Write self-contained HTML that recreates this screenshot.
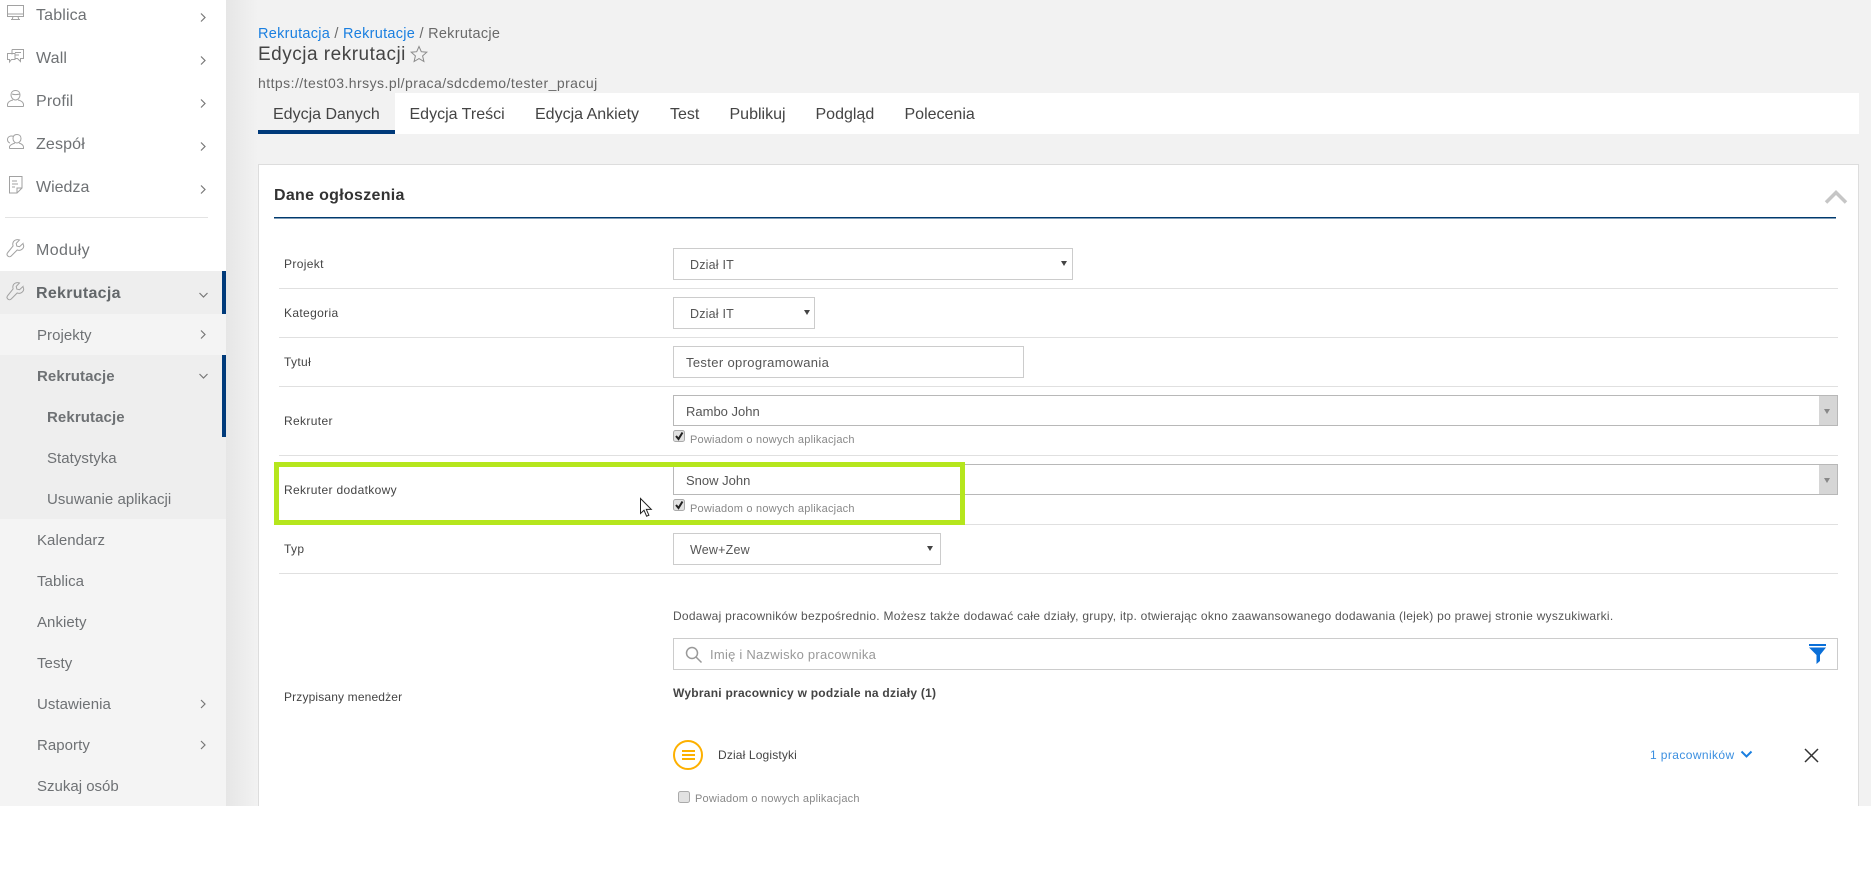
<!DOCTYPE html>
<html lang="pl">
<head>
<meta charset="utf-8">
<title>Edycja rekrutacji</title>
<style>
html,body{margin:0;padding:0;background:#fff;width:1874px;height:881px;overflow:hidden;font-family:"Liberation Sans",sans-serif}
#page{position:relative;width:1874px;height:881px;overflow:hidden;background:#fff}
.b{position:absolute}
.t{position:absolute;white-space:nowrap;line-height:20px;height:20px}
.s{font-size:15px;color:#6e7174;letter-spacing:.05px}
.m{font-size:16px;letter-spacing:.15px}
.sb{font-weight:700;letter-spacing:.1px;font-size:15px}
.l{font-size:12px;color:#444;letter-spacing:.35px;left:284px}
.tab{font-size:16px;color:#444;top:105px}
.in{position:absolute;box-sizing:border-box;background:#fff;border:1px solid #ccc}
.v{font-size:12.5px;color:#555;letter-spacing:.2px}
.hr{position:absolute;left:279px;width:1559px;height:1px;background:#e0e0e0}
.ar{position:absolute;width:0;height:0;border-left:3px solid transparent;border-right:3px solid transparent;border-top:5px solid #444}
.ck{font-size:11px;color:#888;letter-spacing:.22px}
svg{position:absolute;overflow:visible}
</style>
</head>
<body>
<div id="page">
  <!-- backgrounds -->
  <div class="b" style="left:0;top:0;width:1871px;height:806px;background:#f2f2f2"></div>
  <div class="b" style="left:226px;top:0;width:32px;height:806px;background:linear-gradient(90deg,#e6e6e6,#f2f2f2)"></div>

  <!-- sidebar -->
  <div class="b" style="left:0;top:0;width:226px;height:806px;background:#fff"></div>
  <div class="b" style="left:5px;top:217px;width:203px;height:1px;background:#e3e3e3"></div>
  <div class="b" style="left:0;top:271px;width:226px;height:43px;background:#eee"></div>
  <div class="b" style="left:0;top:314px;width:226px;height:492px;background:#f4f4f4"></div>
  <div class="b" style="left:0;top:355px;width:226px;height:164px;background:#eee"></div>
  <div class="b" style="left:222px;top:271px;width:4px;height:43px;background:#003a7a"></div>
  <div class="b" style="left:222px;top:355px;width:4px;height:82px;background:#003a7a"></div>

  <div class="t s m" style="left:36px;top:6px">Tablica</div>
  <div class="t s m" style="left:36px;top:49px">Wall</div>
  <div class="t s m" style="left:36px;top:92px">Profil</div>
  <div class="t s m" style="left:36px;top:135px">Zespół</div>
  <div class="t s m" style="left:36px;top:178px;letter-spacing:0">Wiedza</div>
  <div class="t s m" style="left:36px;top:241px;letter-spacing:.4px">Moduły</div>
  <div class="t s sb" style="left:36px;top:284px;font-size:16px;letter-spacing:.3px;color:#63676a">Rekrutacja</div>
  <div class="t s" style="left:37px;top:326px">Projekty</div>
  <div class="t s sb" style="left:37px;top:367px">Rekrutacje</div>
  <div class="t s sb" style="left:47px;top:408px">Rekrutacje</div>
  <div class="t s" style="left:47px;top:449px">Statystyka</div>
  <div class="t s" style="left:47px;top:490px">Usuwanie aplikacji</div>
  <div class="t s" style="left:37px;top:531px">Kalendarz</div>
  <div class="t s" style="left:37px;top:572px">Tablica</div>
  <div class="t s" style="left:37px;top:613px">Ankiety</div>
  <div class="t s" style="left:37px;top:654px">Testy</div>
  <div class="t s" style="left:37px;top:695px">Ustawienia</div>
  <div class="t s" style="left:37px;top:736px">Raporty</div>
  <div class="t s" style="left:37px;top:777px;letter-spacing:0">Szukaj osób</div>

  <!-- sidebar chevrons -->
  <svg style="left:0;top:0" width="226" height="806" fill="none" stroke="#777" stroke-width="1.2">
    <path d="M201 13.500l4 4-4 4M201 56.500l4 4-4 4M201 99.500l4 4-4 4M201 142.500l4 4-4 4M201 185.500l4 4-4 4"/>
    <path d="M201 330.500l4 4-4 4M201 700l4 4-4 4M201 741l4 4-4 4"/>
    <path d="M199.500 293l4 4 4-4M199.500 374l4 4 4-4"/>
  </svg>

  <!-- sidebar icons -->
  <svg style="left:0;top:0" width="40" height="310" fill="none" stroke="#a2a2a2" stroke-width="1">
    <path d="M7.500 5.500h16v11h-16zM7.500 14h16M13 16.500l-.8 3M18 16.500l.8 3M11 19.500h9"/>
    <path d="M12 49.500h11.500v9h-3v3l-3-3H15M12 49.500v5M7.500 53.500H15v6h-3.500l-2 2.500v-2.500h-2zM15 52.500h6M15 55h4"/>
    <path d="M15.500 90.500c3 0 4.500 2 4.500 4.500s-2 5-4.500 5-4.500-2.500-4.500-5 1.500-4.500 4.500-4.500zM7.500 106.500v-2c0-2.500 3-4 5.500-4.500M23.500 106.500v-2c0-2.500-3-4-5.500-4.500M7.500 106.500h16M12 94c2 .8 4.500.8 8 0"/>
    <path d="M17 134.500c2.500 0 4 1.700 4 4s-1.700 4.500-4 4.500-4-2-4-4.500 1.500-4 4-4zM9.500 148.500h14v-1.500c0-2-2.500-3.300-4.500-4M15 143c-2 .7-5.500 2-5.500 4v1.500M13.500 136.500c-3-1.500-6 .5-6 3 0 1.700 1 3 2.500 3.500"/>
    <path d="M9.500 176.500h12.500v11.500l-5 5H9.500zM22 188h-5v5M12 181h5M12 184h6M12 187h3"/>
    <path d="M23 243.500l-3.500 3.200-2.700-.6-.6-2.700 3.300-3.400c-2.600-1-5.500 0-6.400 2.400-.5 1.300-.4 2.500 0 3.500L7.800 252.500c-1 1.100-1 2.500 0 3.500s2.400 1 3.400 0l6-6c2 .7 4 .2 5.300-1.200 1.300-1.300 1.500-3.200.5-4.800z"/>
    <path d="M23 286.500l-3.500 3.200-2.700-.6-.6-2.700 3.300-3.400c-2.600-1-5.500 0-6.400 2.400-.5 1.300-.4 2.500 0 3.500L7.800 295.500c-1 1.100-1 2.500 0 3.500s2.400 1 3.400 0l6-6c2 .7 4 .2 5.300-1.200 1.300-1.300 1.500-3.200.5-4.800z"/>
  </svg>

  <!-- header -->
  <div class="t" style="left:258px;top:24px;font-size:14.5px;letter-spacing:.28px;color:#6a6a6a"><span style="color:#1a7fe0">Rekrutacja</span> / <span style="color:#1a7fe0">Rekrutacje</span> / Rekrutacje</div>
  <div class="t" style="left:258px;top:45px;font-size:19px;letter-spacing:.5px;color:#444">Edycja rekrutacji</div>
  <svg style="left:410px;top:45px" width="18" height="18" viewBox="0 0 18 18" fill="none" stroke="#8a8a8a" stroke-width="1"><path d="M9 1.500l2.300 5.200 5.500.5-4.200 3.700 1.300 5.600L9 13.600 4.100 16.500l1.300-5.600L1.200 7.200l5.500-.5z"/></svg>
  <div class="t" style="left:258px;top:73px;font-size:14px;letter-spacing:.45px;color:#666">https://test03.hrsys.pl/praca/sdcdemo/tester_pracuj</div>

  <!-- tabs -->
  <div class="b" style="left:258px;top:93px;width:1601px;height:41px;background:#fff"></div>
  <div class="b" style="left:258px;top:93px;width:137px;height:37px;background:#f2f2f2"></div>
  <div class="b" style="left:258px;top:130px;width:137px;height:4px;background:#003a7a"></div>
  <div class="t tab" style="left:273px">Edycja Danych</div>
  <div class="t tab" style="left:409.5px">Edycja Treści</div>
  <div class="t tab" style="left:535px">Edycja Ankiety</div>
  <div class="t tab" style="left:670px">Test</div>
  <div class="t tab" style="left:729.5px">Publikuj</div>
  <div class="t tab" style="left:815.5px">Podgląd</div>
  <div class="t tab" style="left:904.5px">Polecenia</div>

  <!-- card -->
  <div class="b" style="left:258px;top:164px;width:1601px;height:642px;box-sizing:border-box;background:#fff;border:1px solid #ddd;border-bottom:0"></div>
  <div class="t" style="left:274px;top:186px;font-size:16px;font-weight:700;letter-spacing:.3px;color:#333">Dane ogłoszenia</div>
  <div class="b" style="left:274px;top:217px;width:1562px;height:1px;background:#003a6e;box-shadow:0 .5px 0 #003a6e"></div>
  <svg style="left:1824px;top:187px" width="24" height="18" fill="none" stroke="#c6c6c6" stroke-width="3.500"><path d="M2 15.500l10-10 10 10"/></svg>

  <div class="hr" style="top:288px"></div>
  <div class="hr" style="top:337px"></div>
  <div class="hr" style="top:386px"></div>
  <div class="hr" style="top:455px"></div>
  <div class="hr" style="top:524px"></div>
  <div class="hr" style="top:573px"></div>

  <div class="t l" style="top:254px">Projekt</div>
  <div class="t l" style="top:303px">Kategoria</div>
  <div class="t l" style="top:352px">Tytuł</div>
  <div class="t l" style="top:411px">Rekruter</div>
  <div class="t l" style="top:480px">Rekruter dodatkowy</div>
  <div class="t l" style="top:539px">Typ</div>
  <div class="t l" style="top:687px;letter-spacing:.15px">Przypisany menedżer</div>

  <div class="in" style="left:673px;top:248px;width:400px;height:32px"></div>
  <div class="t v" style="left:690px;top:255px">Dział IT</div>
  <div class="ar" style="left:1061px;top:261px"></div>

  <div class="in" style="left:673px;top:297px;width:142px;height:32px"></div>
  <div class="t v" style="left:690px;top:304px">Dział IT</div>
  <div class="ar" style="left:804px;top:310px"></div>

  <div class="in" style="left:673px;top:346px;width:351px;height:32px"></div>
  <div class="t" style="left:686px;top:353px;font-size:13px;letter-spacing:.35px;color:#555">Tester oprogramowania</div>

  <div class="in" style="left:673px;top:395px;width:1165px;height:31px;border-color:#b8b8b8"></div>
  <div class="b" style="left:1819px;top:396px;width:18px;height:29px;background:#d6d6d6"></div>
  <div class="ar" style="left:1824px;top:409px;border-top-color:#888;border-left-width:3.500px;border-right-width:3.500px"></div>
  <div class="t" style="left:686px;top:402px;font-size:13px;letter-spacing:0;color:#555">Rambo John</div>
  <svg style="left:673px;top:430px" width="13" height="13"><rect x=".5" y=".5" width="11" height="11" rx="2" fill="#e2e2e2" stroke="#aaa"/><path d="M3 6l2.500 3L9.500 2.500" fill="none" stroke="#222" stroke-width="2"/></svg>
  <div class="t ck" style="left:690px;top:430px">Powiadom o nowych aplikacjach</div>

  <div class="in" style="left:673px;top:464px;width:1165px;height:31px;border-color:#b8b8b8"></div>
  <div class="b" style="left:1819px;top:465px;width:18px;height:29px;background:#d6d6d6"></div>
  <div class="ar" style="left:1824px;top:478px;border-top-color:#888;border-left-width:3.500px;border-right-width:3.500px"></div>
  <div class="t" style="left:686px;top:471px;font-size:13px;letter-spacing:0;color:#555">Snow John</div>
  <svg style="left:673px;top:499px" width="13" height="13"><rect x=".5" y=".5" width="11" height="11" rx="2" fill="#e2e2e2" stroke="#aaa"/><path d="M3 6l2.500 3L9.500 2.500" fill="none" stroke="#222" stroke-width="2"/></svg>
  <div class="t ck" style="left:690px;top:499px">Powiadom o nowych aplikacjach</div>

  <!-- highlight -->
  <div class="b" style="left:274px;top:462px;width:691px;height:63px;box-sizing:border-box;border:5px solid #b5e61d"></div>

  <!-- cursor -->
  <svg style="left:640px;top:498px" width="13" height="20" viewBox="0 0 13 20"><path d="M.5.500v15l3.500-3.300 2.600 6 2.300-1-2.600-5.800h5z" fill="#fff" stroke="#222" stroke-width="1"/></svg>

  <div class="in" style="left:673px;top:533px;width:268px;height:32px"></div>
  <div class="t v" style="left:690px;top:540px">Wew+Zew</div>
  <div class="ar" style="left:927px;top:546px"></div>

  <!-- assigned manager -->
  <div class="t" style="left:673px;top:606px;font-size:12px;letter-spacing:.265px;color:#555">Dodawaj pracowników bezpośrednio. Możesz także dodawać całe działy, grupy, itp. otwierając okno zaawansowanego dodawania (lejek) po prawej stronie wyszukiwarki.</div>
  <div class="in" style="left:673px;top:638px;width:1165px;height:32px"></div>
  <svg style="left:685px;top:646px" width="18" height="18" fill="none" stroke="#999" stroke-width="1.500"><circle cx="7" cy="7" r="5.500"/><path d="M11 11l5.500 5.500"/></svg>
  <div class="t" style="left:710px;top:645px;font-size:13px;letter-spacing:.25px;color:#999">Imię i Nazwisko pracownika</div>
  <svg style="left:1809px;top:644px" width="18" height="20" fill="#0a6fd8"><rect x="0" y="0" width="17" height="2"/><path d="M0 3.500h17l-6 7.500v6l-3.500 3V11z"/></svg>

  <div class="t" style="left:673px;top:683px;font-size:12px;font-weight:700;letter-spacing:.25px;color:#444">Wybrani pracownicy w podziale na działy (1)</div>

  <svg style="left:673px;top:740px" width="30" height="30" fill="none" stroke="#fdb000"><circle cx="15" cy="15" r="14" stroke-width="2"/><path d="M9 11h13M9 15h13M9 19h13" stroke-width="2"/></svg>
  <div class="t" style="left:718px;top:745px;font-size:12px;letter-spacing:.15px;color:#444">Dział Logistyki</div>

  <svg style="left:678px;top:791px" width="13" height="13"><rect x=".5" y=".5" width="11" height="11" rx="2" fill="#e2e2e2" stroke="#aaa"/></svg>
  <div class="t ck" style="left:695px;top:789px">Powiadom o nowych aplikacjach</div>

  <div class="t" style="left:1650px;top:745px;font-size:12px;letter-spacing:.4px;color:#3b8fe0">1 pracowników</div>
  <svg style="left:1740px;top:750px" width="13" height="9" fill="none" stroke="#1a7fe0" stroke-width="2"><path d="M1.500 1.500l5 5 5-5"/></svg>
  <svg style="left:1804px;top:748px" width="15" height="15" fill="none" stroke="#333" stroke-width="1.500"><path d="M1 1l13 13M14 1L1 14"/></svg>
</div>
</body>
</html>
